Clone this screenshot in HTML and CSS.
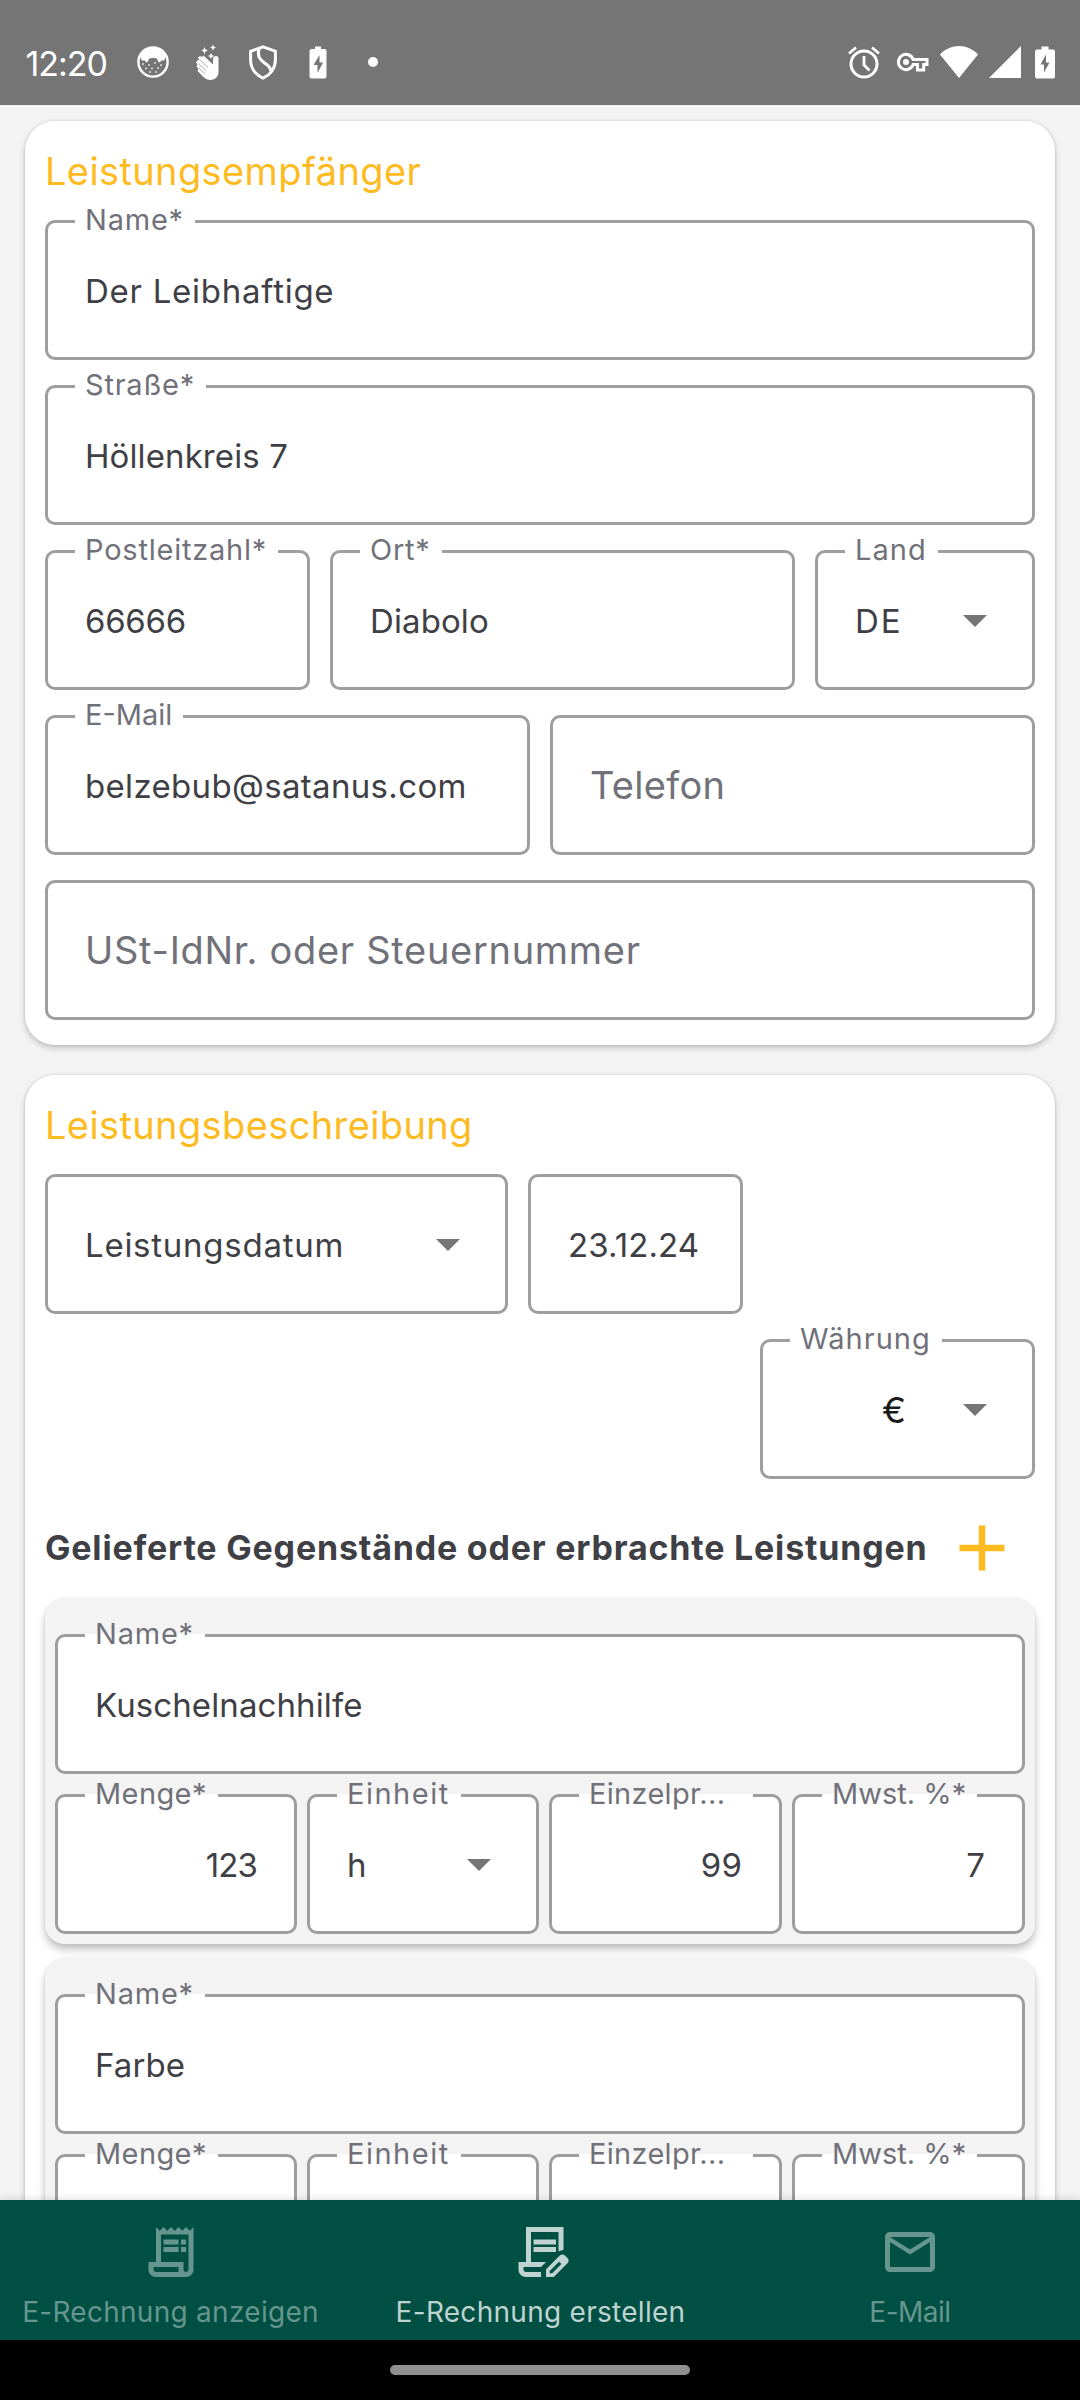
FILE: index.html
```html
<!DOCTYPE html>
<html lang="de">
<head>
<meta charset="utf-8">
<title>E-Rechnung erstellen</title>
<link rel="stylesheet" href="styles.css">
</head>
<body>
<div class="screen">
  <header class="status">
    <span class="clock">12:20</span>
    <div class="notifications">
      <svg width="36" height="36" viewBox="0 0 36 36"><circle cx="18" cy="18" r="14.6" fill="none" stroke="#fff" stroke-width="2.4"/><path fill="#fff" d="M5 13C7 6 12 3 18 3s11 3 13 10l-2 3.500h-3l-1 2-2-1-1-3c-2-.8-6-.8-8 0l-1 3-2 1-1-2H7z"/><g fill="#fff" opacity=".75"><circle cx="8" cy="20" r="1"/><circle cx="14" cy="21" r="1"/><circle cx="20" cy="19" r="1"/><circle cx="26" cy="21" r="1"/><circle cx="11" cy="24.500" r="1"/><circle cx="17" cy="24.500" r="1"/><circle cx="23" cy="24" r="1"/><circle cx="15" cy="28" r="1"/><circle cx="21" cy="28" r="1"/></g></svg>
      <svg width="36" height="36" viewBox="0 0 36 36"><path fill="#fff" d="M7 17l2-1.500-1-2 2-1.500 2 1 1.500-1.500 9.500 9V14.500c0-3 5.500-3.500 5.500 0V28c0 4-3 8-8 8-3 0-5-1-7-3l-6-6 1-2-2-2.500 1-2-1.500-2z"/><path stroke="#757575" stroke-width=".6" fill="none" d="M9.500 15.500l8.500 8M8.500 19.500l7.500 7M9 24l6 5.500"/><path fill="#fff" d="M14.500 3l1 2.500 2.500 1-2.500 1-1 2.500-1-2.500-2.500-1 2.500-1zM23 .5l.9 2.100 2.100.9-2.100.9-.9 2.100-.9-2.100-2.100-.9 2.100-.9zM21 9l1 2 2 1-2 1-1 2-1-2-2-1 2-1z"/></svg>
      <svg width="36" height="36" viewBox="0 0 36 36" fill="none" stroke="#fff" stroke-width="3"><path d="M18 2.800L5.600 7.200V16c0 8.500 5.400 15 12.400 18.200C25 31 30.400 24.500 30.400 16V7.200z"/><path d="M14 4.500c-2 8 1 11 5 14s7.500 5 6.500 9"/></svg>
      <svg width="36" height="36" viewBox="0 0 36 36"><path fill="#fff" fill-rule="evenodd" d="M15 2.500h6V5h3.500q2 0 2 2v25.500q0 2-2 2h-13q-2 0-2-2V7q0-2 2-2H15zM19.500 11l-6 10h4v8l5.500-10.500h-3.500z"/></svg>
      <svg width="36" height="36" viewBox="0 0 36 36"><circle cx="18" cy="18" r="5" fill="#fff"/></svg>
    </div>
    <div class="system">
      <svg class="alarm" width="36" height="36" viewBox="0 0 36 36" fill="none" stroke="#fff"><circle cx="18" cy="20" r="13" stroke-width="3"/><path stroke-width="2.800" d="M18 12v9l5.500 5.500M3 9.500l7-6M33 9.500l-7-6"/></svg>
      <svg class="key" width="36" height="36" viewBox="0 0 36 36"><g fill="none" stroke="#fff" stroke-width="3"><path d="M18.200 15.500H32v5h-3.300V26h-6.200v-5.500h-4.300a7.600 7.600 0 1 1 0-5z"/></g><circle cx="11" cy="18" r="3" fill="#fff"/></svg>
      <svg class="wifi" width="40" height="36" viewBox="0 0 40 36"><path fill="#fff" d="M1 10.500C6 5 13 2 20 2s14 3 19 8.500L20 34z"/></svg>
      <svg class="signal" width="34" height="36" viewBox="0 0 34 36"><path fill="#fff" d="M33 2v32H1z"/></svg>
      <svg class="battery" width="20" height="36" viewBox="0 0 20 36"><path fill="#fff" fill-rule="evenodd" d="M6.500 2.500h7V5.500H18q2 0 2 2v25q0 2-2 2H2q-2 0-2-2v-25q0-2 2-2h4.500zM11 10.500l-5.500 10h3.500v8l5.500-10H11z"/></svg>
    </div>
  </header>

  <main class="content">
    <section class="card">
      <h2 class="title">Leistungsempfänger</h2>
      <div class="field"><span class="label">Name*</span><span class="value airy">Der Leibhaftige</span></div>
      <div class="field"><span class="label">Straße*</span><span class="value">Höllenkreis 7</span></div>
      <div class="row address">
        <div class="field"><span class="label">Postleitzahl*</span><span class="value snug">66666</span></div>
        <div class="field"><span class="label">Ort*</span><span class="value">Diabolo</span></div>
        <div class="field"><span class="label loose">Land</span><span class="value country">DE</span><i class="arrow"></i></div>
      </div>
      <div class="row contact">
        <div class="field"><span class="label tight">E-Mail</span><span class="value mail">belzebub@satanus.com</span></div>
        <div class="field"><span class="value placeholder">Telefon</span></div>
      </div>
      <div class="field"><span class="value placeholder wide">USt-IdNr. oder Steuernummer</span></div>
    </section>

    <section class="card">
      <h2 class="title">Leistungsbeschreibung</h2>
      <div class="row date">
        <div class="field"><span class="value airy">Leistungsdatum</span><i class="arrow"></i></div>
        <div class="field"><span class="value">23.12.24</span></div>
      </div>
      <div class="row currency">
        <div class="field"><span class="label loose">Währung</span><span class="value euro">€</span><i class="arrow"></i></div>
      </div>
      <div class="items">
        <div class="items-head">
          <h3>Gelieferte Gegenstände oder erbrachte Leistungen</h3>
          <svg width="46" height="46" viewBox="0 0 46 46"><path stroke="#fdbb1f" stroke-width="6.500" d="M23 .5v45M.5 23h45"/></svg>
        </div>
        <article class="item">
          <div class="field"><span class="label">Name*</span><span class="value">Kuschelnachhilfe</span></div>
          <div class="row amounts">
            <div class="field"><span class="label near">Menge*</span><span class="value number one">123</span></div>
            <div class="field"><span class="label unit">Einheit</span><span class="value">h</span><i class="arrow"></i></div>
            <div class="field"><span class="label price">Einzelpr...</span><span class="value number">99</span></div>
            <div class="field"><span class="label tight">Mwst. %*</span><span class="value number">7</span></div>
          </div>
        </article>
        <article class="item">
          <div class="field"><span class="label">Name*</span><span class="value">Farbe</span></div>
          <div class="row amounts">
            <div class="field"><span class="label near">Menge*</span></div>
            <div class="field"><span class="label unit">Einheit</span></div>
            <div class="field"><span class="label price">Einzelpr...</span></div>
            <div class="field"><span class="label tight">Mwst. %*</span></div>
          </div>
        </article>
      </div>
    </section>
  </main>

  <nav class="tabs">
    <a class="tab">
      <svg width="60" height="60" viewBox="0 0 24 24" fill="currentColor"><path d="M19.500 3.500L18 2l-1.500 1.500L15 2l-1.500 1.500L12 2l-1.500 1.500L9 2 7.500 3.500 6 2v14H3v3c0 1.660 1.340 3 3 3h12c1.660 0 3-1.340 3-3V2l-1.500 1.500zM15 20H6c-.55 0-1-.45-1-1v-1h10v2zm4-1c0 .55-.45 1-1 1s-1-.45-1-1v-3H8V5h11v14z"/><path d="M9 7h6v2H9zM16 7h2v2h-2zM9 10h6v2H9zM16 10h2v2h-2z"/></svg>
      <span>E-Rechnung anzeigen</span>
    </a>
    <a class="tab active">
      <svg width="60" height="60" viewBox="0 0 24 24" fill="currentColor"><path d="M6 2h15v9.100l-2 .7V4H8v12h6l-2 2H5v1c0 .55.45 1 1 1h6v2H6c-1.660 0-3-1.340-3-3v-3h3z"/><path d="M9 7h9v2H9zM9 10h9v2H9z"/><path fill-rule="evenodd" d="M14 22v-3.100l5.500-5.500c.6-.6 1.500-.6 2.100 0l1 1c.6.6.6 1.500 0 2.100L17.100 22zM15.500 20.500h.95l3.700-3.700-.95-.95-3.700 3.700z"/></svg>
      <span>E-Rechnung erstellen</span>
    </a>
    <a class="tab mailtab">
      <svg width="60" height="60" viewBox="0 0 24 24" fill="currentColor"><path d="M22 6c0-1.100-.9-2-2-2H4c-1.100 0-2 .9-2 2v12c0 1.100.9 2 2 2h16c1.100 0 2-.9 2-2V6zm-2 0l-8 5-8-5h16zm0 12H4V8l8 5 8-5v10z"/></svg>
      <span>E-Mail</span>
    </a>
  </nav>
  <footer class="gesture"><i class="pill"></i></footer>
</div>
</body>
</html>
```
FILE: styles.css
```css
* {
  box-sizing: border-box;
}

body {
  margin: 0;
  font-family: Inter, "Open Sans", sans-serif;
  color: #3f3f46;
}

.screen {
  display: flex;
  flex-direction: column;
  width: 1080px;
  height: 2400px;
  overflow: hidden;
  background: #f3f3f3;
}

/* Status bar */
.status {
  display: flex;
  align-items: center;
  flex: none;
  height: 105px;
  padding: 19px 25.5px 0 25.5px;
  background: #757575;
}

.status svg {
  display: block;
}

.clock {
  width: 109.5px;
  font-size: 34px;
  letter-spacing: -1px;
  color: #fff;
  padding-top: 3px;
}

.notifications {
  display: flex;
  gap: 19px;
}

.system {
  display: flex;
  margin-left: auto;
}

.key { margin-left: 13.5px; }
.wifi { margin-left: 8px; }
.signal { margin-left: 9px; }
.battery { margin-left: 12.5px; }

/* Scrolling form */
.content {
  display: flex;
  flex-direction: column;
  gap: 30px;
  flex: none;
  height: 2095px;
  padding: 16px 25px 0;
  overflow: hidden;
}

.card {
  display: flex;
  flex-direction: column;
  flex: none;
  gap: 25px;
  padding: 25px 20px;
  border-radius: 30px;
  background: #fff;
  box-shadow: 0 3px 6px rgba(0, 0, 0, .2), 0 0 3px rgba(0, 0, 0, .12);
}

.title {
  margin: 0 0 -1px;
  font-size: 38px;
  line-height: 50px;
  font-weight: 400;
  letter-spacing: .38px;
  color: #fdbb1f;
}

.row {
  display: grid;
}

.address { grid-template-columns: 265px 465px 220px; gap: 20px; }
.contact { grid-template-columns: 485px 485px; gap: 20px; }
.date { grid-template-columns: 463px 215px; gap: 20px; }
.currency { grid-template-columns: 275px; justify-content: end; }
.amounts { grid-template-columns: 242px 232px 233px 233px; gap: 10px; }

.field {
  position: relative;
  display: flex;
  align-items: center;
  height: 140px;
  padding-left: 37px;
  border: 3px solid #9e9e9e;
  border-radius: 10px;
  background: #fff;
}

/* Floating label; the 3px white strip opens the outline behind it */
.label {
  position: absolute;
  left: 27px;
  top: -21px;
  height: 36px;
  padding: 0 11px 0 10px;
  font-size: 29px;
  line-height: 36px;
  letter-spacing: .78px;
  white-space: nowrap;
  color: #71717a;
  background: linear-gradient(#fff, #fff) 0 18px / 100% 3px no-repeat;
}

.label.tight { letter-spacing: 0; }
.label.near { letter-spacing: .4px; }
.label.loose { letter-spacing: 1.05px; }
.label.unit { letter-spacing: 1.5px; }
.label.price { letter-spacing: .3px; padding-right: 28px; }

.value {
  padding-top: 1px;
  font-size: 33px;
  line-height: 40px;
  letter-spacing: .1px;
  white-space: nowrap;
}

.value.airy { letter-spacing: .74px; }
.value.snug { letter-spacing: -.3px; }
.value.mail { letter-spacing: .33px; }
.value.country { letter-spacing: 2px; }

.value.placeholder {
  padding-top: 0;
  font-size: 38px;
  line-height: 46px;
  letter-spacing: .3px;
  color: #71717a;
}

.value.placeholder.wide { letter-spacing: .7px; }

.value.number {
  margin-left: auto;
  padding-right: 37px;
}

.value.one { letter-spacing: -.9px; }

.value.euro {
  margin-left: auto;
  margin-right: 57px;
  font-size: 36px;
  color: #1b1b1b;
}

.arrow {
  margin-left: auto;
  margin-right: 45px;
  border: 12px solid transparent;
  border-top-color: #757575;
  border-bottom: 0;
}

.field .arrow {
  position: relative;
  top: 1px;
}

.euro + .arrow {
  margin-left: 0;
}

/* Line items */
.items {
  display: flex;
  flex-direction: column;
  gap: 14px;
}

.items-head {
  display: flex;
  align-items: center;
  justify-content: space-between;
  height: 88px;
  margin-bottom: -8px;
  padding-right: 30px;
}

.items-head h3 {
  margin: 0;
  padding-bottom: 2px;
  font-size: 34px;
  font-weight: 700;
  letter-spacing: .8px;
  white-space: nowrap;
}

.item {
  display: flex;
  flex-direction: column;
  gap: 20px;
  padding: 36px 10px 10px;
  border-radius: 20px;
  background: #f3f3f3;
  box-shadow: 0 6px 9px rgba(0, 0, 0, .22), 0 1px 4px rgba(0, 0, 0, .08);
}

/* Bottom navigation */
.tabs {
  position: relative;
  display: grid;
  grid-template-columns: 341px 399px 340px;
  flex: none;
  height: 140px;
  background: #004f43;
  box-shadow: 0 -1px 8px rgba(0, 0, 0, .12);
}

.tab {
  display: flex;
  flex-direction: column;
  align-items: center;
  padding-top: 22px;
  font-size: 28px;
  line-height: 36px;
  letter-spacing: .28px;
  color: #66958e;
}

.tab span {
  margin-top: 12px;
}

.tab.active { color: #bfd3d0; }
.tab.mailtab { letter-spacing: -.5px; }

.gesture {
  display: flex;
  align-items: center;
  justify-content: center;
  flex: none;
  height: 60px;
  background: #000;
}

.pill {
  width: 300px;
  height: 10px;
  border-radius: 5px;
  background: #8f8f8f;
}
```
